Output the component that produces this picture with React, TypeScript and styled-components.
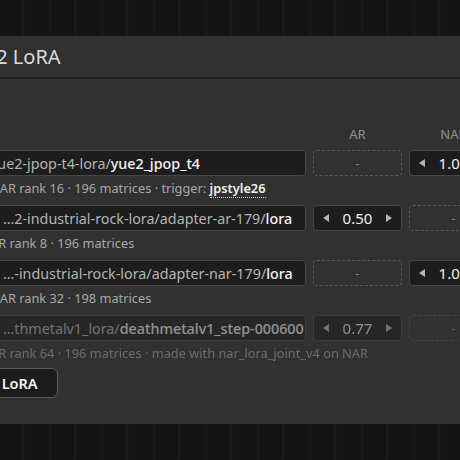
import React from "react";
import styled, { createGlobalStyle } from "styled-components";

const Global = createGlobalStyle`
  html, body { margin: 0; padding: 0; background: #151515; }
  body { font-family: "Noto Sans", "Open Sans", sans-serif; }
`;

const Screen = styled.div`
  width: 460px;
  height: 460px;
  overflow: hidden;
  padding-top: 36px;
  box-sizing: border-box;
  background-color: #141414;
  background-image: repeating-linear-gradient(
    90deg,
    rgba(255,255,255,0) 0px,
    rgba(255,255,255,0) 22px,
    rgba(255,255,255,0.04) 23px,
    rgba(255,255,255,0) 25px,
    rgba(255,255,255,0) 49px,
    rgba(255,255,255,0.03) 50px,
    rgba(255,255,255,0) 52px
  );
`;

const Panel = styled.section`
  margin-left: -40px;
  width: 560px;
  height: 388px;
  background: #313131;
  display: flex;
  flex-direction: column;
`;

const Header = styled.header`
  height: 41px;
  display: flex;
  align-items: center;
  padding-left: 0;
  border-bottom: 2px solid #242424;
`;

const Title = styled.h2`
  margin: 0 0 0 2px;
  font-size: 20px;
  font-weight: 400;
  color: #dcdcdc;
`;

const Body = styled.div`
  padding: 47px 22px 0 32px;
  display: flex;
  flex-direction: column;
`;

const Grid = styled.div`
  display: grid;
  grid-template-columns: 1fr 89px 89px;
  column-gap: 7px;
`;

const HeadRow = styled(Grid)`
  height: 16px;
  margin-bottom: 8px;
  font-size: 13px;
  line-height: 16px;
  color: #929292;
`;

const HeadCell = styled.div<{ $align?: string; $shift?: number }>`
  text-align: ${(p) => p.$align || "center"};
  margin-left: ${(p) => p.$shift || 0}px;
`;

const List = styled.div`
  display: flex;
  flex-direction: column;
  gap: 9px;
`;

const Row = styled(Grid)<{ $disabled?: boolean }>`
  row-gap: 4px;
  opacity: ${(p) => (p.$disabled ? 0.5 : 1)};
`;

const PathBox = styled.div`
  height: 26px;
  box-sizing: border-box;
  background: #1d1d1d;
  border: 1px solid #474747;
  border-radius: 4px;
  display: flex;
  align-items: center;
  padding-left: 10px;
  overflow: hidden;
  white-space: nowrap;
  font-size: 14.3px;
`;

const PathText = styled.span<{ $shift?: number }>`
  margin-left: ${(p) => p.$shift || 0}px;
`;

const Dir = styled.span`
  color: #b4b4b4;
`;

const File = styled.span`
  color: #f4f4f4;
  font-weight: 500;
`;

const Empty = styled.div`
  height: 26px;
  box-sizing: border-box;
  border: 1px dashed #585858;
  border-radius: 4px;
  display: flex;
  align-items: center;
  justify-content: center;
  color: #8a8a8a;
  font-size: 12px;
`;

const Stepper = styled.div`
  height: 26px;
  box-sizing: border-box;
  background: #1d1d1d;
  border: 1px solid #474747;
  border-radius: 4px;
  display: flex;
  align-items: center;
  justify-content: space-between;
  padding: 0 9px;
`;

const Value = styled.span`
  color: #f0f0f0;
  font-size: 15px;
`;

const Arrow = styled.span<{ $dir: "left" | "right" }>`
  width: 0;
  height: 0;
  border-top: 4.5px solid transparent;
  border-bottom: 4.5px solid transparent;
  ${(p) =>
    p.$dir === "left"
      ? "border-right: 6px solid #b4b4b4;"
      : "border-left: 6px solid #b4b4b4;"}
`;

const Meta = styled.div`
  grid-column: 1 / -1;
  font-size: 12.8px;
  line-height: 16px;
  color: #a8a8a8;
  white-space: nowrap;
  margin-left: -2px;
`;

const Trigger = styled.span`
  color: #f2f2f2;
  font-weight: 600;
  border-bottom: 1px dotted #d0d0d0;
`;

const AddButton = styled.button`
  align-self: flex-start;
  margin-top: 7px;
  margin-left: -41px;
  height: 30px;
  padding: 0 19px 0 18px;
  background: #1c1c1c;
  border: 1px solid #585858;
  border-radius: 6px;
  color: #f2f2f2;
  font-family: inherit;
  font-size: 14.5px;
  font-weight: 600;
`;

type Cell = { value?: string };

const Weight = ({ value }: Cell) =>
  value ? (
    <Stepper>
      <Arrow $dir="left" />
      <Value>{value}</Value>
      <Arrow $dir="right" />
    </Stepper>
  ) : (
    <Empty>-</Empty>
  );

const rows = [
  {
    dir: "yue2-jpop-t4-lora/",
    file: "yue2_jpop_t4",
    shift: -13,
    ar: undefined,
    nar: "1.00",
    meta: (
      <>
        NAR rank 16 · 196 matrices · trigger: <Trigger>jpstyle26</Trigger>
      </>
    ),
  },
  {
    dir: "…2-industrial-rock-lora/adapter-ar-179/",
    file: "lora",
    ar: "0.50",
    nar: undefined,
    meta: <>AR rank 8 · 196 matrices</>,
  },
  {
    dir: "…-industrial-rock-lora/adapter-nar-179/",
    file: "lora",
    ar: undefined,
    nar: "1.00",
    meta: <>NAR rank 32 · 198 matrices</>,
  },
  {
    dir: "…thmetalv1_lora/",
    file: "deathmetalv1_step-000600",
    ar: "0.77",
    nar: undefined,
    disabled: true,
    meta: <>AR rank 64 · 196 matrices · made with nar_lora_joint_v4 on NAR</>,
  },
];

export default function App() {
  return (
    <>
      <Global />
      <Screen>
        <Panel>
          <Header>
            <Title>YuE2 LoRA</Title>
          </Header>
          <Body>
            <HeadRow>
              <HeadCell $align="left" $shift={-20}>Path</HeadCell>
              <HeadCell>AR</HeadCell>
              <HeadCell>NAR</HeadCell>
            </HeadRow>
            <List>
              {rows.map((r, i) => (
                <Row key={i} $disabled={r.disabled}>
                  <PathBox>
                    <PathText $shift={r.shift}>
                      <Dir>{r.dir}</Dir>
                      <File>{r.file}</File>
                    </PathText>
                  </PathBox>
                  <Weight value={r.ar} />
                  <Weight value={r.nar} />
                  <Meta>{r.meta}</Meta>
                </Row>
              ))}
            </List>
            <AddButton>Add LoRA</AddButton>
          </Body>
        </Panel>
      </Screen>
    </>
  );
}
